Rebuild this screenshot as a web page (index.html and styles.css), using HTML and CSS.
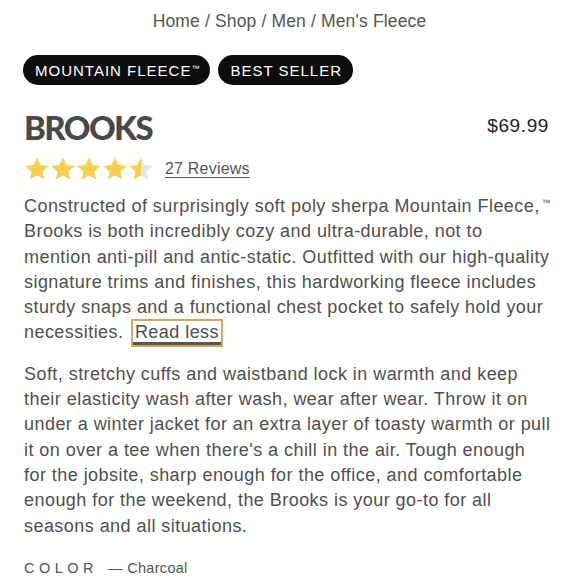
FILE: index.html
```html
<!DOCTYPE html>
<html>
<head>
<meta charset="utf-8">
<link rel="stylesheet" href="styles.css">
</head>
<body>
<div class="page">
  <nav class="crumbs">Home / Shop / Men / Men's Fleece</nav>
  <div class="badges">
    <span class="badge">MOUNTAIN FLEECE<sup>™</sup></span>
    <span class="badge">BEST SELLER</span>
  </div>
  <div class="title-row">
    <h1 class="title">BROOKS</h1>
    <div class="price">$69.99</div>
  </div>
  <div class="rating">
    <div class="stars">
      <svg width="130" height="26" viewBox="0 0 130 26">
        <defs>
          <path id="s" d="M13 1.5l3.4 7.6 8.3.8-6.3 5.5 1.9 8.1L13 19.3l-7.3 4.2 1.9-8.1L1.3 9.9l8.3-.8z"/>
          <linearGradient id="half" x1="0" x2="1" y1="0" y2="0">
            <stop offset="0.52" stop-color="#f5cf4f"/>
            <stop offset="0.52" stop-color="#e6e6e6"/>
          </linearGradient>
        </defs>
        <use href="#s" x="0" fill="#f5cf4f"/>
        <use href="#s" x="26" fill="#f5cf4f"/>
        <use href="#s" x="52" fill="#f5cf4f"/>
        <use href="#s" x="78" fill="#f5cf4f"/>
        <use href="#s" x="104" fill="url(#half)"/>
      </svg>
    </div>
    <a class="reviews" href="#">27 Reviews</a>
  </div>
  <div class="body">
    <p class="desc">Constructed of surprisingly soft poly sherpa Mountain Fleece,<sup>™</sup> Brooks is both incredibly cozy and ultra-durable, not to mention anti-pill and antic-static. Outfitted with our high-quality signature trims and finishes, this hardworking fleece includes sturdy snaps and a functional chest pocket to safely hold your necessities. <a class="more" href="#">Read less</a></p>
    <p class="desc">Soft, stretchy cuffs and waistband lock in warmth and keep their elasticity wash after wash, wear after wear. Throw it on under a winter jacket for an extra layer of toasty warmth or pull it on over a tee when there's a chill in the air. Tough enough for the jobsite, sharp enough for the office, and comfortable enough for the weekend, the Brooks is your go-to for all seasons and all situations.</p>
  </div>
  <div class="color"><span class="color-label">COLOR</span><span class="color-value">— Charcoal</span></div>
</div>
</body>
</html>
```

FILE: styles.css
```css
* { box-sizing: border-box; }
body {
  margin: 0;
  background: #fff;
  font-family: "Liberation Sans", Arial, sans-serif;
  color: #4f4f4f;
}
.page {
  padding: 10px 24px 0 24px;
}
.crumbs {
  text-align: center;
  font-size: 17.5px;
  letter-spacing: 0.15px;
  color: #555;
  line-height: 22px;
}
.badges {
  display: flex;
  gap: 8px;
  margin-top: 23px;
  margin-left: -1px;
}
.badge {
  background: #0d0d0d;
  color: #fff;
  border-radius: 15px;
  height: 30px;
  padding: 0 11px 0 12px;
  display: inline-flex;
  align-items: center;
  font-size: 15px;
  letter-spacing: 1px;
}
.badge sup {
  font-size: 8px;
  position: relative;
  top: -2px;
  letter-spacing: 0;
}
.title-row {
  display: flex;
  justify-content: space-between;
  align-items: flex-start;
  margin-top: 22px;
}
.title {
  margin: 0;
  font-family: Lato, sans-serif;
  font-weight: 900;
  font-size: 33px;
  line-height: 40px;
  color: #494949;
  letter-spacing: -1.6px;
}
.price {
  font-size: 19px;
  letter-spacing: 0.6px;
  color: #222;
  margin-top: 8px;
  margin-right: 6px;
}
.rating {
  display: flex;
  align-items: center;
  gap: 11px;
  margin-top: 9px;
}
.stars svg { display: block; }
.reviews {
  color: #555;
  font-size: 16px;
  letter-spacing: 0.2px;
  text-decoration: underline;
  text-underline-offset: 3px;
}
.body {
  margin-right: 3px;
}
.desc {
  margin: 12px 0 0 0;
  font-size: 18px;
  letter-spacing: 0.45px;
  line-height: 25.3px;
  color: #4f4f4f;
}
.desc + .desc { margin-top: 16px; }
.desc sup {
  font-size: 9px;
  vertical-align: 6px;
  line-height: 0;
  letter-spacing: 0;
  margin-left: 2px;
  margin-right: -8px;
}
.more {
  color: #4f4f4f;
  text-decoration: none;
  padding: 1px 2px 0 2px;
  border-bottom: 3px solid #555;
  outline: 2px solid #d4a65a;
  outline-offset: 0;
  margin-left: 4px;
}
.color {
  margin-top: 21px;
  font-size: 14.5px;
  color: #555;
  display: flex;
  gap: 10px;
}
.color-label { letter-spacing: 4.5px; }
.color-value { letter-spacing: 0.3px; }
```
